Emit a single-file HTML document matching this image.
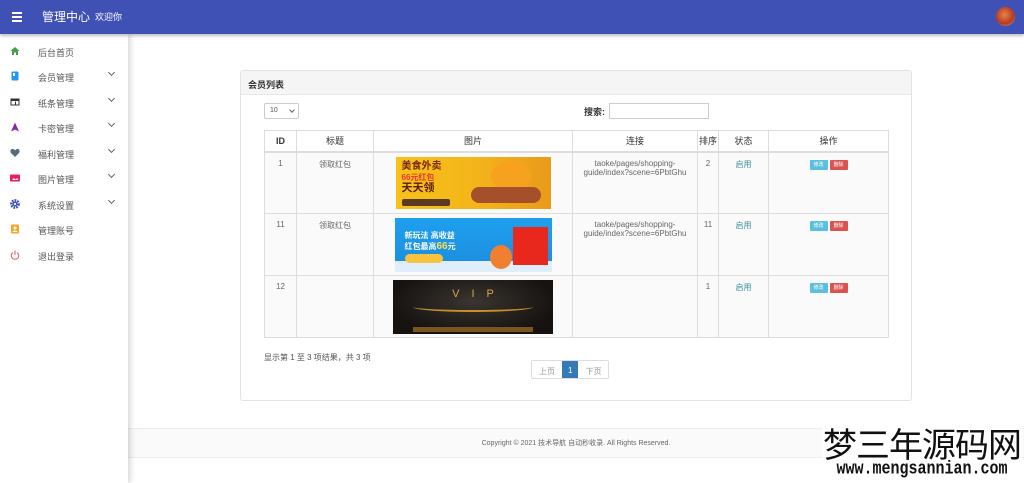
<!DOCTYPE html>
<html><head><meta charset="utf-8"><style>
*{box-sizing:border-box;margin:0;padding:0}
body{width:1024px;height:483px;overflow:hidden;background:#fff;font-family:"Liberation Sans","Noto Sans CJK SC",sans-serif;position:relative;color:#333}
.hdr{position:absolute;left:0;top:0;width:1024px;height:34px;background:#3f51b5;box-shadow:0 2px 3px rgba(0,0,0,.25);z-index:3}
.hdr .t{position:absolute;left:42px;top:9px;color:#fff;font-size:12px;line-height:16px}
.hdr .w{position:absolute;left:95px;top:11px;color:#fff;font-size:9px;line-height:12px}
.burger{position:absolute;left:12px;top:12px;width:10px}
.burger i{display:block;height:1.5px;background:#fff;margin-bottom:2.5px}
.av{position:absolute;left:996px;top:7px;width:19px;height:19px;border-radius:50%;background:radial-gradient(circle at 45% 40%,#e8804a,#b43a1e 60%,#d9c6b8)}
.side{position:absolute;left:0;top:34px;width:128px;height:449px;background:#fff;box-shadow:2px 0 6px rgba(0,0,0,.18);z-index:2}
.it{position:absolute;left:0;width:128px;height:20px;font-size:9px;color:#555}
.it span{position:absolute;left:38px;top:5px}
.it .ic{position:absolute;left:10px;top:5px;width:10px;height:10px}
.it .ch{position:absolute;left:109px;top:4px;width:5px;height:5px;border-right:1.3px solid #666;border-bottom:1.3px solid #666;transform:rotate(45deg)}
.footer{position:absolute;left:128px;top:428px;width:896px;height:30px;background:#fafafa;border-top:1px solid #eee;border-bottom:1px solid #eee;font-size:7px;color:#666;text-align:center;line-height:29px}
.card{position:absolute;left:240px;top:70px;width:672px;height:331px;border:1px solid #e3e3e3;border-radius:3px;background:#fff}
.card .h{height:24px;background:#f5f5f5;border-bottom:1px solid #e8e8e8;font-size:9px;font-weight:bold;padding:7px 0 0 7px;color:#333}
.sel{position:absolute;left:23px;top:32px;width:35px;height:16px;border:1px solid #ccc;border-radius:2px;font-size:7px;padding:3px 0 0 5px;color:#555}
.sel:after{content:"";position:absolute;left:25px;top:4px;width:3px;height:3px;border-right:1px solid #666;border-bottom:1px solid #666;transform:rotate(45deg)}
.srch{position:absolute;left:343px;top:34px;font-size:9px;font-weight:bold}
.inp{position:absolute;left:368px;top:32px;width:100px;height:16px;border:1px solid #ccc}
table{position:absolute;left:23px;top:59px;border-collapse:collapse;font-size:8px;color:#666}
td,th{border:1px solid #ddd;text-align:center;vertical-align:top}
th{height:21px;font-weight:normal;color:#333;vertical-align:middle;border-bottom:2px solid #ddd;font-size:9px}
td{padding-top:6px}
tr.r td{height:62px;background:#fafafa}
.img{margin:-2px auto 0;width:157px;height:52px;position:relative;overflow:hidden}
.btn{display:inline-block;width:18px;height:10px;font-size:5px;color:#fff;line-height:10px;border-radius:1px;margin:0 1px}
.b1{background:#5bc0de}.b2{background:#d9534f}
.en{color:#3a8f9c}
.info{position:absolute;left:23px;top:281px;font-size:8px;color:#555}
.pg{position:absolute;left:290px;top:289px;height:19px;border:1px solid #ddd;border-radius:2px;display:flex;font-size:8px;color:#999;background:#fff}
.pg div{padding:5px 7px 0}
.pg .a{background:#337ab7;color:#fff;padding:5px 6px 0}
.wm{position:absolute;left:822px;top:424px;width:200px;z-index:4;text-align:center;background:#fff}
.wm .c{font-size:34px;line-height:38px;color:#111;font-family:"Noto Sans CJK SC",sans-serif;letter-spacing:-1px}
.wm .e{font-family:"Liberation Mono",monospace;font-size:15px;font-weight:bold;color:#111;line-height:16px;transform:scaleY(1.2)}
</style></head><body>
<div class="hdr"><div class="burger"><i></i><i></i><i></i></div><div class="t">管理中心</div><div class="w">欢迎你</div><div class="av"></div></div>
<div class="side">
<div class="it" style="top:7px"><svg class="ic" viewBox="0 0 10 10"><path d="M5 1L0.5 5H2V9H4V6.5H6V9H8V5H9.5Z" fill="#43a047"/></svg><span>后台首页</span></div>
<div class="it" style="top:32px"><svg class="ic" viewBox="0 0 10 10"><rect x="1.5" y="0.5" width="7" height="9" rx="1" fill="#2196f3"/><rect x="3" y="2" width="2" height="3" fill="#fff"/></svg><span>会员管理</span><i class="ch"></i></div>
<div class="it" style="top:58px"><svg class="ic" viewBox="0 0 10 10"><rect x="0.5" y="1.5" width="9" height="7" fill="#333"/><rect x="1.5" y="4" width="7" height="3.5" fill="#fff"/><rect x="5" y="4.5" width="1" height="3" fill="#333"/></svg><span>纸条管理</span><i class="ch"></i></div>
<div class="it" style="top:83px"><svg class="ic" viewBox="0 0 10 10"><path d="M5 0.5L1 9.5L5 7.5L9 9.5Z" fill="#8e24aa"/></svg><span>卡密管理</span><i class="ch"></i></div>
<div class="it" style="top:109px"><svg class="ic" viewBox="0 0 10 10"><path d="M5 9L1 5C-0.5 3 1 0.5 3 1C4 1.2 5 2.3 5 2.3C5 2.3 6 1.2 7 1C9 0.5 10.5 3 9 5Z" fill="#546e7a"/></svg><span>福利管理</span><i class="ch"></i></div>
<div class="it" style="top:134px"><svg class="ic" viewBox="0 0 10 10"><rect x="0" y="1.5" width="10" height="7" rx="1" fill="#e91e63"/><path d="M2 7L4 5L5.5 6.5L7 5L8.5 7Z" fill="#fff"/></svg><span>图片管理</span><i class="ch"></i></div>
<div class="it" style="top:160px"><svg class="ic" viewBox="0 0 10 10"><circle cx="5" cy="5" r="3.7" fill="none" stroke="#3f51b5" stroke-width="2.4" stroke-dasharray="1.8 1"/><circle cx="5" cy="5" r="2.5" fill="#3f51b5"/><circle cx="5" cy="5" r="1.1" fill="#fff"/></svg><span>系统设置</span><i class="ch"></i></div>
<div class="it" style="top:185px"><svg class="ic" viewBox="0 0 10 10"><rect x="1" y="0.5" width="8" height="9" rx="1" fill="#f5a623"/><circle cx="5" cy="4" r="1.5" fill="#fff"/><path d="M2.5 8C2.5 6 7.5 6 7.5 8Z" fill="#fff"/></svg><span>管理账号</span></div>
<div class="it" style="top:211px"><svg class="ic" viewBox="0 0 10 10"><path d="M3 2.5A3.7 3.7 0 1 0 7 2.5" fill="none" stroke="#e57373" stroke-width="1.2"/><path d="M5 0.5V5" stroke="#e57373" stroke-width="1.2"/></svg><span>退出登录</span></div>
</div>

<div class="card">
<div class="h">会员列表</div>
<div class="sel">10</div>
<div class="srch">搜索:</div><div class="inp"></div>
<table>
<tr><th style="width:32px;font-weight:bold">ID</th><th style="width:77px">标题</th><th style="width:199px">图片</th><th style="width:125px">连接</th><th style="width:21px">排序</th><th style="width:50px">状态</th><th style="width:120px">操作</th></tr>
<tr class="r"><td>1</td><td>领取红包</td><td><div class="img" style="background:linear-gradient(90deg,#f7c21a 0,#f4b51a 50%,#e99a1a 100%);width:155px">
<div style="position:absolute;left:6px;top:4px;font-size:10px;font-weight:bold;color:#7a2a10;line-height:11px;text-align:left">美食外卖<br><span style="color:#e33;font-size:8px">66元红包</span><br><span style="font-size:11px;color:#5a1a0a">天天领</span></div>
<div style="position:absolute;left:6px;top:42px;width:48px;height:7px;background:#5a3a20;border-radius:2px"></div>
<div style="position:absolute;left:95px;top:4px;width:40px;height:30px;background:#f6a21e;border-radius:50%"></div>
<div style="position:absolute;left:75px;top:30px;width:70px;height:16px;background:#a5502a;border-radius:8px"></div>
</div></td><td>taoke/pages/shopping-<br>guide/index?scene=6PbtGhu</td><td>2</td><td class="en">启用</td><td><span class="btn b1">修改</span><span class="btn b2">删除</span></td></tr>
<tr class="r"><td>11</td><td>领取红包</td><td><div class="img" style="background:linear-gradient(180deg,#1fa0ee,#1c8fe0 80%,#dfeefa 80%);height:54px">
<div style="position:absolute;left:10px;top:12px;font-size:8px;font-weight:bold;color:#fff;line-height:11px;text-align:left">新玩法 高收益<br>红包最高<span style="color:#ffe04a;font-size:10px">66</span>元</div>
<div style="position:absolute;left:10px;top:36px;width:38px;height:9px;background:#f8c440;border-radius:5px"></div>
<div style="position:absolute;left:118px;top:9px;width:35px;height:38px;background:#e8281c"></div>
<div style="position:absolute;left:95px;top:27px;width:22px;height:24px;background:#f08030;border-radius:50%"></div>
</div></td><td>taoke/pages/shopping-<br>guide/index?scene=6PbtGhu</td><td>11</td><td class="en">启用</td><td><span class="btn b1">修改</span><span class="btn b2">删除</span></td></tr>
<tr class="r"><td>12</td><td></td><td><div class="img" style="background:radial-gradient(ellipse at 50% 40%,#3a3530,#151210 75%);width:160px;height:54px">
<div style="position:absolute;left:0;top:8px;width:160px;font-size:11px;color:#d8a64a;letter-spacing:12px;text-align:center;padding-left:12px">VIP</div>
<div style="position:absolute;left:20px;top:22px;width:120px;height:10px;border-bottom:2px solid #c8902a;border-radius:0 0 50% 50%"></div>
<div style="position:absolute;left:20px;top:47px;width:120px;height:5px;background:#7a5520"></div>
</div></td><td></td><td>1</td><td class="en">启用</td><td><span class="btn b1">修改</span><span class="btn b2">删除</span></td></tr>
</table>
<div class="info">显示第 1 至 3 项结果，共 3 项</div>
<div class="pg"><div>上页</div><div class="a">1</div><div>下页</div></div>
</div>
<div class="footer">Copyright © 2021 技术导航 自动秒收录. All Rights Reserved.</div>
<div class="wm"><div class="c">梦三年源码网</div><div class="e">www.mengsannian.com</div></div>
</body></html>
